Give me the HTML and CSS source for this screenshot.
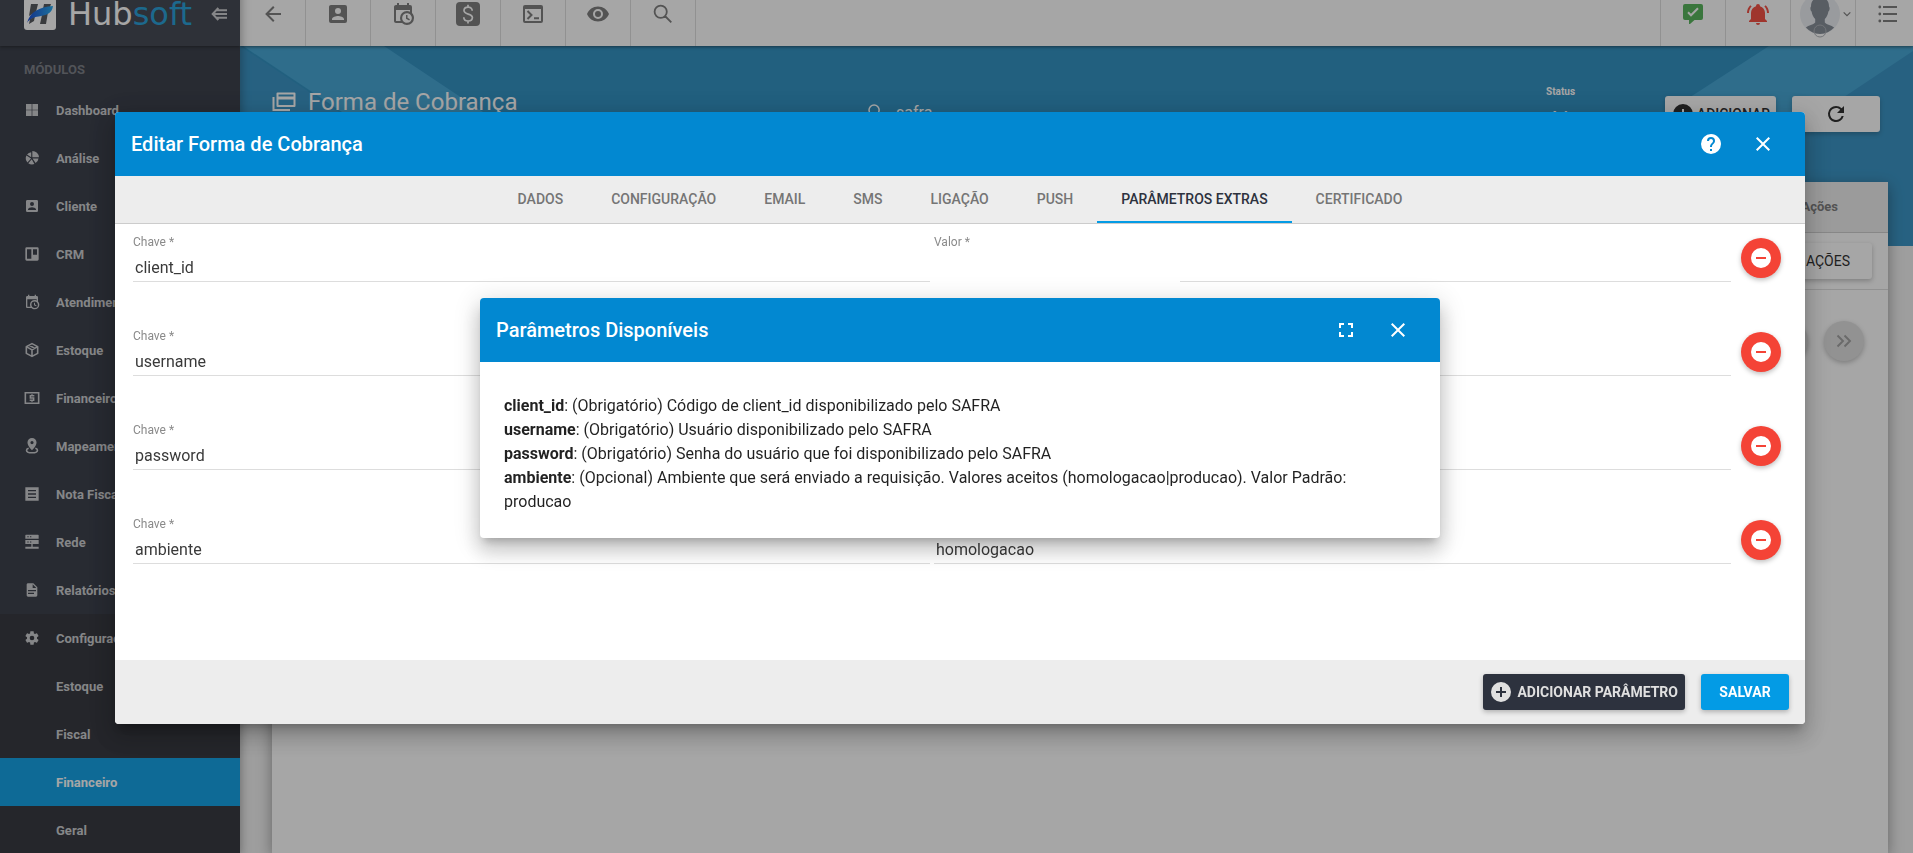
FILE: index.html
```html
<!DOCTYPE html>
<html lang="pt-BR">
<head>
<meta charset="utf-8">
<meta name="viewport" content="width=device-width, initial-scale=1">
<title>Hubsoft - Forma de Cobrança</title>
<link rel="stylesheet" href="styles.css">
</head>
<body>
<svg class="sprite" aria-hidden="true">
  <symbol id="i-grid" viewBox="0 0 24 24"><path d="M3 3h8.500v8.500H3zM12.500 3H21v8.500h-8.500zM3 12.500h8.500V21H3zM12.500 12.500H21V21h-8.500z"/></symbol>
  <symbol id="i-pie" viewBox="0 0 24 24"><path d="M12.500 1.500A10 10 0 0 1 22.500 11h-10zM10.800 3.200v7.500L4.600 6.600A9.500 9.500 0 0 1 10.800 3.200zM3.600 8.200l7 4.600-5.400 5.800A9.500 9.500 0 0 1 3.600 8.200zM12.800 12.700h9a9.500 9.500 0 0 1-4.400 6.800zM11.600 14l4 7a9.500 9.500 0 0 1-9.200-1.300z"/></symbol>
  <symbol id="i-account" viewBox="0 0 24 24"><path d="M6 17C6 15 10 13.900 12 13.900S18 15 18 17V18H6M15 9A3 3 0 0 1 12 12A3 3 0 0 1 9 9A3 3 0 0 1 12 6A3 3 0 0 1 15 9M3 5V19A2 2 0 0 0 5 21H19A2 2 0 0 0 21 19V5A2 2 0 0 0 19 3H5C3.890 3 3 3.900 3 5Z"/></symbol>
  <symbol id="i-board" viewBox="0 0 24 24"><path fill-rule="evenodd" d="M4 2h16a2 2 0 0 1 2 2v16a2 2 0 0 1-2 2H4a2 2 0 0 1-2-2V4a2 2 0 0 1 2-2zM4.500 5v14h6.500V5zM13.500 5v8h6V5z"/></symbol>
  <symbol id="i-calendar" viewBox="0 0 24 24"><path d="M15,13H16.500V15.820L18.940,17.230L18.190,18.530L15,16.690V13M19,8H5V19H9.670C9.240,18.090 9,17.070 9,16A7,7 0 0,1 16,9C17.070,9 18.090,9.240 19,9.670V8M5,21C3.890,21 3,20.100 3,19V5C3,3.890 3.890,3 5,3H6V1H8V3H16V1H18V3H19A2,2 0 0,1 21,5V11.100C22.240,12.360 23,14.090 23,16A7,7 0 0,1 16,23C14.090,23 12.360,22.240 11.100,21H5M16,11.150A4.850,4.850 0 0,0 11.150,16C11.150,18.680 13.320,20.850 16,20.850A4.850,4.850 0 0,0 20.850,16C20.850,13.320 18.680,11.150 16,11.150Z"/></symbol>
  <symbol id="i-box" viewBox="0 0 24 24"><path fill="none" stroke="currentColor" stroke-width="2.400" stroke-linejoin="round" d="M12 2.500 20.500 7v10L12 21.500 3.500 17V7zM3.500 7l8.500 4.800L20.500 7M12 11.800v9.700M7.800 4.800l8.400 4.700"/></symbol>
  <symbol id="i-cash" viewBox="0 0 24 24"><path fill="none" stroke="currentColor" stroke-width="2.400" d="M2 4.200h20v15.600H2z"/><path fill="none" stroke="currentColor" stroke-width="2.200" d="M15.500 8.500H9.500v3.500h5v3.500h-6M12 6.500v2M12 15.500v2"/></symbol>
  <symbol id="i-pin" viewBox="0 0 24 24"><path fill-rule="evenodd" d="M12 0a6.800 6.800 0 0 1 6.800 6.800C18.800 12 12 18.500 12 18.500S5.200 12 5.200 6.800A6.800 6.800 0 0 1 12 0zm0 4.500a2.400 2.400 0 1 0 0 4.800 2.400 2.400 0 0 0 0-4.800z"/><path fill="none" stroke="currentColor" stroke-width="2.400" d="M7 15.500c-2 .6-3.200 1.500-3.200 2.700 0 2.500 3.700 4 8.200 4s8.200-1.500 8.200-4c0-1.200-1.200-2.100-3.200-2.700"/></symbol>
  <symbol id="i-note" viewBox="0 0 24 24"><path fill-rule="evenodd" d="M2 2h20v20H2zM6 6v2h12V6zM6 11v2h12v-2zM6 16v2h12v-2z"/></symbol>
  <symbol id="i-server" viewBox="0 0 24 24"><path fill-rule="evenodd" d="M3 1h18a1 1 0 0 1 1 1v5H2V2a1 1 0 0 1 1-1zM5 3.500v1.500h2V3.500zM9 3.500v1.500h2V3.500zM2 9h20v6H2zM5 11.200v1.500h2v-1.500zM9 11.200v1.500h2v-1.500zM11 15h2v4h9v3H2v-3h9z"/></symbol>
  <symbol id="i-file" viewBox="0 0 24 24"><path d="M13,9H18.500L13,3.500V9M6,2H14L20,8V20A2,2 0 0,1 18,22H6C4.890,22 4,21.100 4,20V4C4,2.890 4.890,2 6,2M15,18V16H6V18H15M18,14V12H6V14H18Z"/></symbol>
  <symbol id="i-gear" viewBox="0 0 24 24"><path d="M12,15.500A3.500,3.500 0 0,1 8.500,12A3.500,3.500 0 0,1 12,8.500A3.500,3.500 0 0,1 15.500,12A3.500,3.500 0 0,1 12,15.500M19.430,12.970C19.470,12.650 19.500,12.330 19.500,12C19.500,11.670 19.470,11.340 19.430,11L21.540,9.370C21.730,9.220 21.780,8.950 21.660,8.730L19.660,5.270C19.540,5.050 19.270,4.960 19.050,5.050L16.560,6.050C16.040,5.660 15.500,5.320 14.870,5.070L14.500,2.420C14.460,2.180 14.250,2 14,2H10C9.750,2 9.540,2.180 9.500,2.420L9.130,5.070C8.500,5.320 7.960,5.660 7.440,6.050L4.950,5.050C4.730,4.960 4.460,5.050 4.340,5.270L2.340,8.730C2.210,8.950 2.270,9.220 2.460,9.370L4.570,11C4.530,11.340 4.500,11.670 4.500,12C4.500,12.330 4.530,12.650 4.570,12.970L2.460,14.630C2.270,14.780 2.210,15.050 2.340,15.270L4.340,18.730C4.460,18.950 4.730,19.030 4.950,18.950L7.440,17.940C7.960,18.340 8.500,18.680 9.130,18.930L9.500,21.580C9.540,21.820 9.750,22 10,22H14C14.250,22 14.460,21.820 14.500,21.580L14.870,18.930C15.500,18.670 16.040,18.340 16.560,17.940L19.050,18.950C19.270,19.030 19.540,18.950 19.660,18.730L21.660,15.270C21.780,15.050 21.730,14.780 21.540,14.630L19.430,12.970Z"/></symbol>
  <symbol id="i-fold" viewBox="0 0 24 24"><path fill="none" stroke="currentColor" stroke-width="3" d="M11 3 2.500 12l8.500 9M9 6.500h15M4 12h20M9 17.500h15"/></symbol>
  <symbol id="i-back" viewBox="0 0 24 24"><path d="M20 11v2H8l5.500 5.500-1.420 1.420L4.160 12l7.920-7.920L13.500 5.500 8 11z"/></symbol>
  <symbol id="i-dollar" viewBox="0 0 24 24"><rect width="24" height="24" rx="4"/><path fill="none" stroke="#fff" stroke-width="1.700" d="M16.200 8.800c0-2.200-1.700-3.600-4-3.600S8 6.500 8 8.600c0 4.600 8.400 2.400 8.400 7 0 2.100-1.800 3.400-4.200 3.400S7.800 17.600 7.800 15.200M12 2.800v2.600M12 18.800v2.600"/></symbol>
  <symbol id="i-console" viewBox="0 0 24 24"><path fill-rule="evenodd" d="M4 3h16a2 2 0 0 1 2 2v14a2 2 0 0 1-2 2H4a2 2 0 0 1-2-2V5a2 2 0 0 1 2-2zM4 7v12h16V7z"/><path fill="none" stroke="currentColor" stroke-width="2" d="m6.500 9 4 4-4 4M13 16.200h5"/></symbol>
  <symbol id="i-eye" viewBox="0 0 24 24"><path d="M12,9A3,3 0 0,0 9,12A3,3 0 0,0 12,15A3,3 0 0,0 15,12A3,3 0 0,0 12,9M12,17A5,5 0 0,1 7,12A5,5 0 0,1 12,7A5,5 0 0,1 17,12A5,5 0 0,1 12,17M12,4.500C7,4.500 2.730,7.610 1,12C2.730,16.390 7,19.500 12,19.500C17,19.500 21.270,16.390 23,12C21.270,7.610 17,4.500 12,4.500Z"/></symbol>
  <symbol id="i-search" viewBox="0 0 24 24"><path fill="none" stroke="currentColor" stroke-width="1.800" d="M15.800 9.700a6.100 6.100 0 1 1-12.200 0 6.100 6.100 0 0 1 12.200 0zM14 14l6.300 6.300"/></symbol>
  <symbol id="i-message" viewBox="0 0 24 24"><path d="M4 2h16a2 2 0 0 1 2 2v12a2 2 0 0 1-2 2h-6.500L9 22H8v-4H4a2 2 0 0 1-2-2V4a2 2 0 0 1 2-2z"/><path fill="none" stroke="#fff" stroke-width="2" d="m7 10.300 3 3 7-7"/></symbol>
  <symbol id="i-bell" viewBox="0 0 24 24"><path d="M21,19V20H3V19L5,17V11C5,7.900 7.030,5.170 10,4.290C10,4.190 10,4.100 10,4A2,2 0 0,1 12,2A2,2 0 0,1 14,4C14,4.100 14,4.190 14,4.290C16.970,5.170 19,7.900 19,11V17L21,19M14,21A2,2 0 0,1 12,23A2,2 0 0,1 10,21M19.750,3.190L18.330,4.610C20.040,6.300 21,8.600 21,11H23C23,8.070 21.840,5.250 19.750,3.190M1,11H3C3,8.600 3.960,6.300 5.670,4.610L4.250,3.190C2.160,5.250 1,8.070 1,11Z"/></symbol>
  <symbol id="i-chevron" viewBox="0 0 24 24"><path fill="none" stroke="currentColor" stroke-width="3.600" d="m2 7 10 10L22 7"/></symbol>
  <symbol id="i-list" viewBox="0 0 24 24"><path d="M7 4h14v2H7zM7 11h14v2H7zM7 18h14v2H7z"/><circle cx="3.800" cy="5" r="1.400"/><circle cx="3.800" cy="12" r="1.400"/><circle cx="3.800" cy="19" r="1.400"/></symbol>
  <symbol id="i-cards" viewBox="0 0 24 24"><path fill="none" stroke="currentColor" stroke-width="2" stroke-linejoin="round" d="M5.500 3.500h17v12.500h-17z"/><path d="M6 6.500h16v3H6z"/><path fill="none" stroke="currentColor" stroke-width="2" d="M1.500 7v13h16.500"/></symbol>
  <symbol id="i-plus" viewBox="0 0 24 24"><path d="M17 13h-4v4h-2v-4H7v-2h4V7h2v4h4m-5-9A10 10 0 0 0 2 12a10 10 0 0 0 10 10 10 10 0 0 0 10-10A10 10 0 0 0 12 2Z"/></symbol>
  <symbol id="i-minus" viewBox="0 0 24 24"><path d="M17 13H7v-2h10m-5-9A10 10 0 0 0 2 12a10 10 0 0 0 10 10 10 10 0 0 0 10-10A10 10 0 0 0 12 2Z"/></symbol>
  <symbol id="i-refresh" viewBox="0 0 24 24"><path d="M17.650 6.350A7.950 7.950 0 0 0 12 4a8 8 0 1 0 7.730 10h-2.080A6 6 0 1 1 12 6c1.660 0 3.140.690 4.220 1.780L13 11h7V4z"/></symbol>
  <symbol id="i-help" viewBox="0 0 24 24"><path d="M15.070,11.250L14.170,12.170C13.450,12.890 13,13.500 13,15H11V14.500C11,13.390 11.450,12.390 12.170,11.670L13.410,10.410C13.780,10.050 14,9.550 14,9C14,7.890 13.100,7 12,7A2,2 0 0,0 10,9H8A4,4 0 0,1 12,5A4,4 0 0,1 16,9C16,9.880 15.640,10.670 15.070,11.250M13,19H11V17H13M12,2A10,10 0 0,0 2,12A10,10 0 0,0 12,22A10,10 0 0,0 22,12C22,6.470 17.500,2 12,2Z"/></symbol>
  <symbol id="i-close" viewBox="0 0 24 24"><path d="M19 6.410 17.590 5 12 10.590 6.410 5 5 6.410 10.590 12 5 17.590 6.410 19 12 13.410 17.590 19 19 17.590 13.410 12z"/></symbol>
  <symbol id="i-full" viewBox="0 0 24 24"><path d="M5 5h5v2H7v3H5zM14 5h5v5h-2V7h-3zM17 14h2v5h-5v-2h3zM10 17v2H5v-5h2v3z"/></symbol>
  <symbol id="i-last" viewBox="0 0 24 24"><path fill="none" stroke="currentColor" stroke-width="1.900" d="m5.500 6.500 5.500 5.500-5.500 5.500M12.500 6.500l5.500 5.500-5.500 5.500"/></symbol>
</svg>

<div class="app">
  <nav class="sidebar" aria-label="Módulos">
    <div class="brand">
      <svg class="brand-mark" viewBox="0 0 32 32" aria-hidden="true">
        <defs><linearGradient id="swoosh"><stop offset="0" stop-color="#0a3fd0"/><stop offset="1" stop-color="#1aa6f0"/></linearGradient></defs>
        <rect width="32" height="32" rx="3" fill="#fff"/>
        <path fill="#4a4d52" d="M7 6h7l-2 8-7 4zM20 6h7l-1 3-7 2zM18 17l6-3-2 12h-6zM6 21l5-3-1 5-5 3z"/>
        <path fill="url(#swoosh)" d="M3 25C6 14 15 9 29 8c-1 7-6 9-12 10S6 20 3 25z"/>
      </svg>
      <span class="brand-name">Hub<span class="brand-accent">soft</span></span>
      <button class="bare" type="button" aria-label="Recolher menu"><svg class="icon-16"><use href="#i-fold"/></svg></button>
    </div>
    <h2 class="nav-title">MÓDULOS</h2>
    <ul class="nav-list">
      <li><a class="nav-item" href="#"><svg class="icon-16"><use href="#i-grid"/></svg>Dashboard</a></li>
      <li><a class="nav-item" href="#"><svg class="icon-16"><use href="#i-pie"/></svg>Análise</a></li>
      <li><a class="nav-item" href="#"><svg class="icon-16"><use href="#i-account"/></svg>Cliente</a></li>
      <li><a class="nav-item" href="#"><svg class="icon-16"><use href="#i-board"/></svg>CRM</a></li>
      <li><a class="nav-item" href="#"><svg class="icon-16"><use href="#i-calendar"/></svg>Atendimento</a></li>
      <li><a class="nav-item" href="#"><svg class="icon-16"><use href="#i-box"/></svg>Estoque</a></li>
      <li><a class="nav-item" href="#"><svg class="icon-16"><use href="#i-cash"/></svg>Financeiro</a></li>
      <li><a class="nav-item" href="#"><svg class="icon-16"><use href="#i-pin"/></svg>Mapeamento</a></li>
      <li><a class="nav-item" href="#"><svg class="icon-16"><use href="#i-note"/></svg>Nota Fiscal</a></li>
      <li><a class="nav-item" href="#"><svg class="icon-16"><use href="#i-server"/></svg>Rede</a></li>
      <li><a class="nav-item" href="#"><svg class="icon-16"><use href="#i-file"/></svg>Relatórios</a></li>
      <li class="nav-open">
        <a class="nav-item" href="#"><svg class="icon-16"><use href="#i-gear"/></svg>Configuração</a>
        <ul class="nav-list">
          <li><a class="nav-item nav-sub" href="#">Estoque</a></li>
          <li><a class="nav-item nav-sub" href="#">Fiscal</a></li>
          <li><a class="nav-item nav-sub nav-active" href="#">Financeiro</a></li>
          <li><a class="nav-item nav-sub" href="#">Geral</a></li>
        </ul>
      </li>
    </ul>
  </nav>

  <div class="main">
    <header class="toolbar">
      <button class="tool" type="button" aria-label="Voltar"><svg class="icon-24"><use href="#i-back"/></svg></button>
      <button class="tool" type="button" aria-label="Clientes"><svg class="icon-24"><use href="#i-account"/></svg></button>
      <button class="tool" type="button" aria-label="Agenda"><svg class="icon-24"><use href="#i-calendar"/></svg></button>
      <button class="tool" type="button" aria-label="Financeiro"><svg class="icon-24"><use href="#i-dollar"/></svg></button>
      <button class="tool" type="button" aria-label="Console"><svg class="icon-24"><use href="#i-console"/></svg></button>
      <button class="tool" type="button" aria-label="Visualizar"><svg class="icon-24"><use href="#i-eye"/></svg></button>
      <button class="tool" type="button" aria-label="Buscar"><svg class="icon-24"><use href="#i-search"/></svg></button>
      <span class="grow"></span>
      <button class="tool tool-right tool-green" type="button" aria-label="Mensagens"><svg class="icon-24"><use href="#i-message"/></svg></button>
      <button class="tool tool-right tool-red" type="button" aria-label="Notificações"><svg class="icon-24"><use href="#i-bell"/></svg></button>
      <button class="tool tool-right tool-user" type="button" aria-label="Usuário">
        <svg class="avatar" viewBox="0 0 40 40" aria-hidden="true">
          <circle cx="20" cy="20" r="20" fill="#e9edf2"/>
          <path fill="#7d8590" d="M20 3.500c6 0 9 3.500 9 9 1 1 .8 4-.6 5-.6 3.500-2 6-3.600 7.500v3.500c2 2.500 6.500 2.500 9.300 5A20 20 0 0 1 20 40a20 20 0 0 1-14.100-6.500c2.800-2.500 7.300-2.500 9.300-5V25c-1.600-1.500-3-4-3.600-7.500-1.400-1-1.600-4-.6-5 0-5.500 3-9 9-9z"/>
          <circle cx="20" cy="37" r="6" fill="none" stroke="#a9adb3" stroke-width="1"/>
        </svg>
        <svg class="icon-8"><use href="#i-chevron"/></svg>
      </button>
      <button class="tool tool-right tool-last" type="button" aria-label="Menu"><svg class="icon-24"><use href="#i-list"/></svg></button>
    </header>

    <main class="page">
      <div class="hero">
        <svg class="facet facet-left" viewBox="0 0 300 200" aria-hidden="true"><path fill="#2c8dc2" d="M0 0l300 200H0z"/><path fill="#39a0d2" d="M3 0h141l156 104v94z"/></svg>
        <svg class="facet facet-right" viewBox="0 0 300 200" aria-hidden="true"><path fill="#2c8dc2" d="M300 0v200H0z"/><path fill="#39a0d2" d="M300 0v5L0 205V101L156 0z"/></svg>
        <div class="hero-bar">
          <h1 class="hero-title"><svg class="icon-24"><use href="#i-cards"/></svg>Forma de Cobrança</h1>
          <label class="hero-search"><svg class="icon-20"><use href="#i-search"/></svg><input type="text" value="safra" aria-label="Pesquisar"></label>
          <label class="hero-status">Status
            <select><option>Ativo</option></select>
          </label>
          <button class="btn btn-light btn-add" type="button"><svg class="icon-24"><use href="#i-plus"/></svg>ADICIONAR</button>
          <button class="btn btn-light btn-refresh" type="button" aria-label="Atualizar"><svg class="icon-24"><use href="#i-refresh"/></svg></button>
        </div>
      </div>
      <section class="card">
        <table class="grid">
          <thead><tr><th scope="col">Ações</th></tr></thead>
          <tbody><tr><td><button class="btn btn-light btn-actions" type="button">AÇÕES</button></td></tr></tbody>
        </table>
        <div class="pager">
          <button class="round" type="button" aria-label="Próxima página"></button>
          <button class="round" type="button" aria-label="Última página"><svg class="icon-24"><use href="#i-last"/></svg></button>
        </div>
      </section>
    </main>
  </div>
</div>

<div class="backdrop">
  <section class="dialog editor" role="dialog" aria-labelledby="editor-title">
    <header class="dialog-head">
      <h2 class="dialog-title" id="editor-title">Editar Forma de Cobrança</h2>
      <button class="bare head-btn" type="button" aria-label="Ajuda"><svg class="icon-24"><use href="#i-help"/></svg></button>
      <button class="bare head-btn" type="button" aria-label="Fechar"><svg class="icon-24"><use href="#i-close"/></svg></button>
    </header>
    <div class="tabs" role="tablist">
      <button class="tab" type="button" role="tab">DADOS</button>
      <button class="tab" type="button" role="tab">CONFIGURAÇÃO</button>
      <button class="tab" type="button" role="tab">EMAIL</button>
      <button class="tab" type="button" role="tab">SMS</button>
      <button class="tab" type="button" role="tab">LIGAÇÃO</button>
      <button class="tab" type="button" role="tab">PUSH</button>
      <button class="tab tab-active" type="button" role="tab" aria-selected="true">PARÂMETROS EXTRAS</button>
      <button class="tab" type="button" role="tab">CERTIFICADO</button>
    </div>
    <form class="params">
      <div class="param">
        <label class="field">Chave *<input type="text" value="client_id"></label>
        <label class="field field-masked">Valor *<input type="text" value=""></label>
        <button class="remove" type="button" aria-label="Remover"><svg class="icon-24"><use href="#i-minus"/></svg></button>
      </div>
      <div class="param">
        <label class="field">Chave *<input type="text" value="username"></label>
        <label class="field">Valor *<input type="text" value=""></label>
        <button class="remove" type="button" aria-label="Remover"><svg class="icon-24"><use href="#i-minus"/></svg></button>
      </div>
      <div class="param">
        <label class="field">Chave *<input type="text" value="password"></label>
        <label class="field">Valor *<input type="text" value=""></label>
        <button class="remove" type="button" aria-label="Remover"><svg class="icon-24"><use href="#i-minus"/></svg></button>
      </div>
      <div class="param">
        <label class="field">Chave *<input type="text" value="ambiente"></label>
        <label class="field">Valor *<input type="text" value="homologacao"></label>
        <button class="remove" type="button" aria-label="Remover"><svg class="icon-24"><use href="#i-minus"/></svg></button>
      </div>
    </form>
    <footer class="dialog-foot">
      <button class="btn btn-dark" type="button"><svg class="icon-24"><use href="#i-plus"/></svg>ADICIONAR PARÂMETRO</button>
      <button class="btn btn-blue" type="button">SALVAR</button>
    </footer>
  </section>

  <section class="dialog info" role="dialog" aria-labelledby="info-title">
    <header class="dialog-head">
      <h2 class="dialog-title" id="info-title">Parâmetros Disponíveis</h2>
      <button class="bare head-btn" type="button" aria-label="Tela cheia"><svg class="icon-24"><use href="#i-full"/></svg></button>
      <button class="bare head-btn" type="button" aria-label="Fechar"><svg class="icon-24"><use href="#i-close"/></svg></button>
    </header>
    <div class="info-body">
      <p><b>client_id</b>: (Obrigatório) Código de client_id disponibilizado pelo SAFRA</p>
      <p><b>username</b>: (Obrigatório) Usuário disponibilizado pelo SAFRA</p>
      <p><b>password</b>: (Obrigatório) Senha do usuário que foi disponibilizado pelo SAFRA</p>
      <p><b>ambiente</b>: (Opcional) Ambiente que será enviado a requisição. Valores aceitos (homologacao|producao). Valor Padrão: producao</p>
    </div>
  </section>
</div>
</body>
</html>
```

FILE: styles.css
```css
* { box-sizing: border-box; }

html, body { height: 100%; }

body {
  margin: 0;
  overflow: hidden;
  background: #f2f2f2;
  color: rgba(0, 0, 0, 0.87);
  font-family: Roboto, "Liberation Sans", sans-serif;
  font-size: 14px;
}

h1, h2, p, ul { margin: 0; padding: 0; }
ul { list-style: none; }
button, input, select { font: inherit; color: inherit; }
button { margin: 0; padding: 0; border: 0; cursor: pointer; }
svg { display: block; flex: none; fill: currentColor; }

.sprite { display: none; }
.icon-8 { width: 8px; height: 8px; }
.icon-16 { width: 16px; height: 16px; }
.icon-20 { width: 20px; height: 20px; }
.icon-24 { width: 24px; height: 24px; }
.bare { background: none; }
.grow { flex: 1; }

/* Shell, scrolled a little under the top edge of the window */
.app {
  display: flex;
  height: calc(100% + 18px);
  margin-top: -18px;
}

.sidebar {
  position: relative;
  z-index: 2;
  flex: none;
  width: 240px;
  overflow: hidden;
  background: #2d323e;
  color: #c9cacd;
  box-shadow: 0 3px 10px rgba(0, 0, 0, 0.4);
}

.brand {
  display: flex;
  align-items: center;
  gap: 8px;
  height: 64px;
  padding: 0 13px 0 24px;
  background: #383d48;
  box-shadow: 0 1px 3px rgba(0, 0, 0, 0.5);
}
.brand-mark { width: 32px; height: 32px; }
.brand-name {
  flex: 1;
  padding-left: 4px;
  color: #fff;
  font-family: "DejaVu Sans", sans-serif;
  font-size: 32px;
  line-height: 24px;
}
.brand-accent { color: #1a9ad6; }

.nav-title {
  padding: 16px 24px 0;
  height: 40px;
  color: #74777f;
  font-size: 13px;
  font-weight: 700;
  line-height: 16px;
}
.nav-item {
  display: flex;
  align-items: center;
  gap: 16px;
  height: 48px;
  padding: 0 24px;
  color: inherit;
  font-size: 13px;
  font-weight: 700;
  text-decoration: none;
}
.nav-sub { padding-left: 56px; }
.nav-open { background: #292b33; }
.nav-active { background: #039be5; color: #fff; }

.main {
  display: flex;
  flex: 1;
  flex-direction: column;
  min-width: 0;
}

.toolbar {
  position: relative;
  z-index: 1;
  display: flex;
  flex: none;
  height: 64px;
  padding-left: 1px;
  background: #fff;
  color: #757575;
  box-shadow: 0 1px 3px rgba(0, 0, 0, 0.5);
}
.tool {
  display: flex;
  align-items: center;
  justify-content: center;
  width: 65px;
  background: none;
  border-right: 1px solid #ddd;
}
.tool-right { border-right: 0; border-left: 1px solid #ddd; }
.tool-green { color: #4caf50; }
.tool-red { color: #f44336; }
.tool-user { gap: 3px; padding-left: 4px; }
.tool-last { width: 58px; padding-left: 7px; }
.avatar { width: 40px; height: 40px; overflow: visible; }

.page {
  display: flex;
  flex: 1;
  flex-direction: column;
  min-height: 0;
}
.hero {
  position: relative;
  flex: none;
  height: 200px;
  overflow: hidden;
  background: #238abe;
  color: #fff;
}
.facet { position: absolute; top: 0; width: 300px; height: 200px; }
.facet-left { left: 0; }
.facet-right { right: 0; }
.hero-bar {
  position: relative;
  display: flex;
  align-items: flex-start;
  padding: 32px 33px 0 32px;
}
.hero-title {
  display: flex;
  flex: 1;
  align-items: center;
  gap: 12px;
  padding-top: 10px;
  font-size: 24px;
  font-weight: 400;
  line-height: 28px;
}
.hero-search {
  display: flex;
  align-items: center;
  gap: 10px;
  width: 680px;
  padding-top: 24px;
}
.hero-search input {
  flex: 1;
  padding: 0;
  border: 0;
  background: none;
  font-size: 16px;
}
.hero-status {
  width: 103px;
  margin-right: 16px;
  padding-top: 8px;
  font-size: 10px;
  font-weight: 700;
  line-height: 12px;
}
.hero-status select {
  display: block;
  width: 100%;
  margin-top: 10px;
  border: 0;
  background: none;
  font-size: 14px;
}

.btn {
  display: flex;
  align-items: center;
  justify-content: center;
  height: 36px;
  gap: 4px;
  border-radius: 3px;
  font-size: 14px;
  font-weight: 700;
  box-shadow: 0 2px 5px rgba(0, 0, 0, 0.26);
}
.btn-light { margin-top: 18px; background: #fff; color: #212121; font-weight: 500; }
.btn-add { width: 111px; margin-right: 16px; gap: 2px; }
.btn-refresh { width: 88px; }
.btn-dark { padding: 0 7px 0 6px; background: #2d323e; color: #e0e0e0; }
.btn-blue { width: 88px; background: #039be5; color: #fff; }

.card {
  position: relative;
  flex: 1;
  margin: -64px 25px 0 32px;
  background: #fff;
  box-shadow: 0 4px 14px rgba(0, 0, 0, 0.4);
}
.grid { width: 100%; border-collapse: collapse; }
.grid th {
  height: 50px;
  padding: 0 50px 0 0;
  border-bottom: 1px solid #ccc;
  background: #ededed;
  color: #757575;
  font-size: 13px;
  font-weight: 700;
  text-align: right;
}
.grid td { height: 57px; padding: 0 16px 0 0; border-bottom: 1px solid #ddd; }
.btn-actions { width: 88px; margin: 0 0 0 auto; font-weight: 400; }
.pager {
  display: flex;
  justify-content: flex-end;
  gap: 16px;
  padding: 31px 24px;
}
.round {
  display: flex;
  align-items: center;
  justify-content: center;
  width: 40px;
  height: 40px;
  border-radius: 50%;
  background: #dedede;
  color: #9b9b9b;
  box-shadow: 0 2px 5px rgba(0, 0, 0, 0.26);
}

/* Dialogs */
.backdrop {
  position: fixed;
  inset: 0;
  z-index: 10;
  background: rgba(33, 33, 33, 0.4);
}
.dialog {
  display: flex;
  flex-direction: column;
  overflow: hidden;
  border-radius: 4px;
  background: #fff;
  box-shadow: 0 7px 8px -4px rgba(0, 0, 0, 0.2), 0 13px 19px 2px rgba(0, 0, 0, 0.14), 0 5px 24px 4px rgba(0, 0, 0, 0.12);
}
.editor { margin: 112px 108px 0 115px; }
.dialog-head {
  display: flex;
  align-items: center;
  gap: 12px;
  height: 64px;
  padding: 0 22px 0 16px;
  background: #0288d1;
  color: #fff;
}
.dialog-title { flex: 1; font-size: 20px; font-weight: 500; }
.head-btn {
  display: flex;
  align-items: center;
  justify-content: center;
  width: 40px;
  height: 40px;
}
.tabs {
  display: flex;
  justify-content: center;
  height: 48px;
  border-bottom: 1px solid #ccc;
  background: #ededed;
}
.tab {
  padding: 0 24px;
  border-bottom: 2px solid transparent;
  background: none;
  color: #757575;
  font-weight: 500;
}
.tab-active { border-bottom-color: #039be5; color: #2d323e; }

.params { padding: 10px 24px 50px 18px; }
.param { display: flex; gap: 4px; height: 94px; }
.field {
  flex: 1;
  height: 48px;
  color: #8a8a8a;
  font-size: 12px;
  line-height: 16px;
}
.field input {
  display: block;
  width: 100%;
  height: 32px;
  padding: 4px 2px 0;
  border: 0;
  border-bottom: 1px solid #ddd;
  background: none;
  color: #3a3a3a;
  font-size: 16px;
}
.field-masked input {
  border-style: solid;
  border-width: 0 0 1px;
  border-image: linear-gradient(to right, transparent 246px, #ddd 246px) 1;
}
.remove {
  display: flex;
  align-items: center;
  justify-content: center;
  width: 40px;
  height: 40px;
  margin: 4px 0 0 6px;
  border-radius: 50%;
  background: #f44336;
  color: #fff;
  box-shadow: 0 2px 5px rgba(0, 0, 0, 0.26);
}
.dialog-foot {
  display: flex;
  align-items: center;
  justify-content: flex-end;
  gap: 16px;
  height: 64px;
  padding: 0 16px;
  background: #ededed;
}

.info {
  position: absolute;
  top: 298px;
  left: 480px;
  width: 960px;
}
.info-body { padding: 32px 48px 24px 24px; font-size: 16px; line-height: 24px; }
```
